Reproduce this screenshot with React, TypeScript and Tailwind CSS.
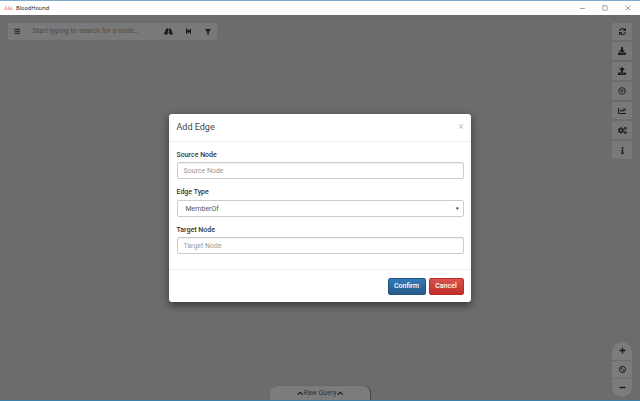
import { CircleArrowUp, Minus as MinusIcon, Square, X } from "lucide-react";
import { FaRoad, FaFilter, FaSync, FaDownload, FaUpload, FaChartLine, FaCogs, FaInfo, FaBan, FaPlus, FaMinus, FaChevronUp, FaBars } from "react-icons/fa";
import type { ReactNode } from "react";

function SideButton({ children }: { children: ReactNode }) {
  return (
    <div className="w-5 h-[17.8px] flex items-center justify-center bg-[#797979] rounded-[1px] text-[#1c1c1c]">
      {children}
    </div>
  );
}

function Field({ label, placeholder }: { label: string; placeholder: string }) {
  return (
    <div className="flex flex-col">
      <label className="block h-[12px] pt-[1px] text-[7px] leading-[12px] font-medium text-[#333] mb-[2px]">{label}</label>
      <div className="h-[17px] pt-[1px] border border-[#ccc] rounded-[2px] flex items-center px-[6px] text-[7px] text-[#999] shadow-[inset_0_1px_1px_rgba(0,0,0,0.075)]">
        {placeholder}
      </div>
    </div>
  );
}

export default function App() {
  return (
    <div className="font-['Roboto','Liberation_Sans',sans-serif] relative w-[640px] h-[401px] overflow-hidden bg-[#6c6c6c] flex flex-col border-b border-[#3f7fa8]">
      <div className="h-[15px] shrink-0 bg-white border-t border-[#7fa9cf] flex items-center justify-between pl-[4px]">
        <div className="flex items-center gap-[3px]">
          <svg width="9" height="7" viewBox="0 0 9 7">
            <path d="M0 6 L2 1 L3.5 6 Z M3 6 L5 1 L6.5 6 Z M5.5 6 L7.5 2 L9 6 Z" fill="#f5b8b8" />
          </svg>
          <span className="text-[5.6px] font-['Noto_Sans','Liberation_Sans',sans-serif] text-[#222]">BloodHound</span>
        </div>
        <div className="flex items-center text-[#333] pr-[0.5px]">
          <div className="w-[23px] flex justify-center"><MinusIcon size={7} strokeWidth={1.5} /></div>
          <div className="w-[23px] flex justify-center"><Square size={6} strokeWidth={1.6} /></div>
          <div className="w-[23px] flex justify-center"><X size={8} strokeWidth={1.4} /></div>
        </div>
      </div>

      <div className="relative flex-1">
        <div className="absolute left-[8px] top-[8px] w-[209px] h-[17px] bg-[#797979] rounded-[1px] flex items-center text-[#1c1c1c]">
          <FaBars size={6.5} className="ml-[6px]" />
          <span className="ml-[12px] text-[7.1px] text-[#4b4b4b] flex-1">Start typing to search for a node...</span>
          <FaRoad size={9} className="mr-[12.5px]" />
          <svg width="5.5" height="6.5" viewBox="0 0 6 7" className="mr-[14px]">
            <path d="M0 0.5H1.4V2.6L3 1.6L4.6 2.6V0.5H6V6.5H4.6V4.4L3 5.4L1.4 4.4V6.5H0Z" fill="#1c1c1c" />
          </svg>
          <FaFilter size={6} className="mr-[6px]" />
        </div>

        <div className="absolute right-[8px] top-[7.5px] flex flex-col gap-[2px]">
          <SideButton><FaSync size={7} /></SideButton>
          <SideButton><FaDownload size={8} /></SideButton>
          <SideButton><FaUpload size={8} /></SideButton>
          <SideButton><CircleArrowUp size={8} strokeWidth={2.6} /></SideButton>
          <SideButton><FaChartLine size={8} /></SideButton>
          <SideButton><FaCogs size={9} /></SideButton>
          <SideButton><FaInfo size={7} /></SideButton>
        </div>

        <div className="absolute right-[8px] bottom-[3px] w-5 rounded-full bg-[#7c7c7c] flex flex-col items-center text-[#1c1c1c]">
          <div className="h-[18.5px] flex items-center justify-center"><FaPlus size={7} /></div>
          <div className="h-[18.5px] w-full flex items-center justify-center border-y border-[#6e6e6e]"><FaBan size={7} /></div>
          <div className="h-[18.5px] flex items-center justify-center"><FaMinus size={7} /></div>
        </div>

        <div className="absolute left-[270px] bottom-0 w-[100px] h-[14px] bg-[#7c7c7c] rounded-t-[7px] shadow-[1px_0_1px_rgba(0,0,0,0.35)] flex items-center justify-center text-[7px] text-[#333]">
          <FaChevronUp size={6.5} className="text-[#111]" />
          <span>Raw Query</span>
          <FaChevronUp size={6.5} className="text-[#111]" />
        </div>

        <div className="absolute left-[169px] top-[99px] w-[302px] h-[188px] bg-white rounded-[3px] shadow-[0_3px_9px_rgba(0,0,0,0.5)] flex flex-col">
          <div className="h-[28px] pt-[1px] shrink-0 border-b border-[#eee] flex items-center justify-between px-[7.5px]">
            <span className="text-[9px] text-[#444]">Add Edge</span>
            <span className="text-[10px] text-[#c4c4c4] -mt-[3px]">×</span>
          </div>
          <div className="flex-1 px-[7.5px] pt-[6px] flex flex-col gap-[6px]">
            <Field label="Source Node" placeholder="Source Node" />
            <div className="flex flex-col">
              <label className="block h-[12px] pt-[1px] text-[7px] leading-[12px] font-medium text-[#333] mb-[3px]">Edge Type</label>
              <div className="h-[17px] pt-[1px] border border-[#ccc] rounded-[2px] flex items-center justify-between pl-[8px] pr-[3px] text-[7px] text-[#555]">
                <span>MemberOf</span>
                <span className="text-[4.5px] text-[#222]">▼</span>
              </div>
            </div>
            <Field label="Target Node" placeholder="Target Node" />
          </div>
          <div className="h-[33px] shrink-0 border-t border-[#eee] flex items-center justify-end gap-[3px] px-[7.5px]">
            <div className="h-[17px] w-[38px] rounded-[2px] bg-gradient-to-b from-[#337ab7] to-[#265a88] border border-[#245580] text-white text-[7px] font-medium flex items-center justify-center">Confirm</div>
            <div className="h-[17px] w-[35px] rounded-[2px] bg-gradient-to-b from-[#d9534f] to-[#c12e2a] border border-[#b92c28] text-white text-[7px] font-medium flex items-center justify-center">Cancel</div>
          </div>
        </div>
      </div>
    </div>
  );
}
